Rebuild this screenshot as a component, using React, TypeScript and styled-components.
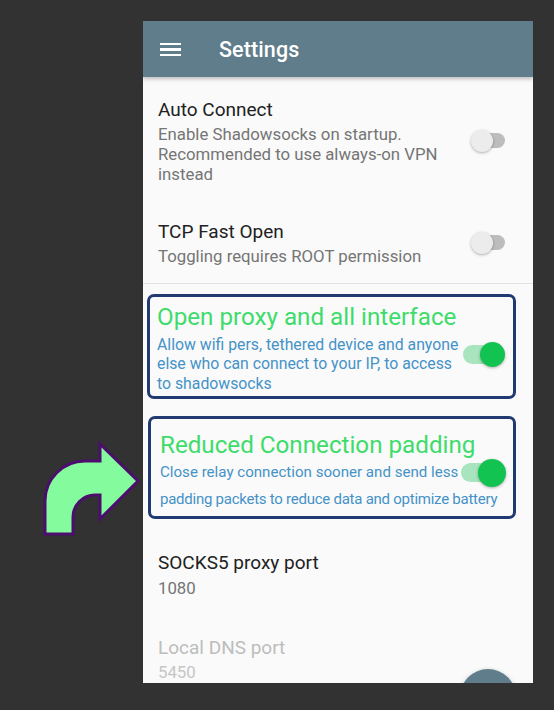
import React from "react";
import styled, { createGlobalStyle } from "styled-components";

const GlobalStyle = createGlobalStyle`
  html, body {
    margin: 0;
    padding: 0;
    background: #323232;
  }
  body {
    font-family: Roboto, "Noto Sans", "Liberation Sans", sans-serif;
  }
`;

const Stage = styled.div`
  position: relative;
  width: 554px;
  height: 710px;
  background: #323232;
  padding: 21px 0 0 143px;
  box-sizing: border-box;
  overflow: hidden;
`;

const Screen = styled.div`
  position: relative;
  width: 390px;
  height: 662px;
  background: #fafafa;
  overflow: hidden;
  display: flex;
  flex-direction: column;
`;

const Toolbar = styled.header`
  height: 56px;
  flex: none;
  background: #607d8b;
  display: flex;
  align-items: center;
  padding-left: 17px;
  gap: 38px;
  box-shadow: 0 2px 4px rgba(0, 0, 0, 0.25);
  position: relative;
  z-index: 1;
`;

const MenuIcon = styled.span`
  width: 21px;
  height: 14px;
  display: flex;
  flex-direction: column;
  justify-content: space-between;
  margin-top: 1px;
  & > i {
    display: block;
    height: 2.4px;
    background: #fff;
  }
`;

const Title = styled.h1`
  margin: 0;
  color: #fff;
  font-size: 21.5px;
  font-weight: 500;
  letter-spacing: 0.1px;
`;

const List = styled.div`
  display: flex;
  flex-direction: column;
`;

const Row = styled.div<{ $pt: number; $pb: number }>`
  display: flex;
  align-items: center;
  padding: ${(p) => p.$pt}px 28px ${(p) => p.$pb}px 15px;
`;

const TextCol = styled.div`
  flex: 1;
  display: flex;
  flex-direction: column;
`;

const RowTitle = styled.div<{ $muted?: boolean }>`
  font-size: 19px;
  line-height: 24px;
  color: ${(p) => (p.$muted ? "#bdbdbd" : "#212121")};
`;

const RowSub = styled.div<{ $muted?: boolean; $gap: number }>`
  font-size: 16.8px;
  line-height: 20px;
  margin-top: ${(p) => p.$gap}px;
  color: ${(p) => (p.$muted ? "#c6c6c6" : "#757575")};
  white-space: pre-line;
`;

const Divider = styled.hr`
  margin: 0;
  border: none;
  height: 1px;
  background: #e2e2e2;
`;

const Highlight = styled.div<{ $mt: number; $ml: number; $pad: string }>`
  margin: ${(p) => p.$mt}px 17px 0 ${(p) => p.$ml}px;
  border: 3px solid #223a72;
  border-radius: 7px;
  padding: ${(p) => p.$pad};
  display: grid;
  grid-template-columns: minmax(0, 1fr) auto;
  column-gap: 2px;
`;

const BoxTitle = styled.div<{ $lh: number; $mb: number }>`
  grid-column: 1 / -1;
  color: #3ddc6b;
  font-size: 24.2px;
  line-height: ${(p) => p.$lh}px;
  margin-bottom: ${(p) => p.$mb}px;
  white-space: nowrap;
`;

const BoxSub = styled.div<{ $lh: number; $size: number; $span?: boolean; $track?: number }>`
  grid-column: ${(p) => (p.$span ? "1 / -1" : "1")};
  color: #4592c7;
  font-size: ${(p) => p.$size}px;
  line-height: ${(p) => p.$lh}px;
  letter-spacing: ${(p) => p.$track ?? 0}px;
  white-space: pre;
`;

const Switch = styled.div<{ $on?: boolean; $thumb: number; $track: number; $w: number; $mt?: number }>`
  position: relative;
  width: ${(p) => p.$w}px;
  height: ${(p) => p.$thumb}px;
  align-self: ${(p) => (p.$mt === undefined ? "center" : "start")};
  margin-top: ${(p) => p.$mt ?? 0}px;
  flex: none;
  &::before {
    content: "";
    position: absolute;
    left: ${(p) => (p.$on ? 0 : p.$thumb / 2)}px;
    right: ${(p) => (p.$on ? p.$thumb / 2 : 0)}px;
    top: ${(p) => (p.$thumb - p.$track) / 2}px;
    height: ${(p) => p.$track}px;
    border-radius: ${(p) => p.$track / 2}px;
    background: ${(p) => (p.$on ? "#a8e4bd" : "#bdbdbd")};
  }
  &::after {
    content: "";
    position: absolute;
    top: 0;
    ${(p) => (p.$on ? "right: 0;" : "left: 0;")}
    width: ${(p) => p.$thumb}px;
    height: ${(p) => p.$thumb}px;
    border-radius: 50%;
    background: ${(p) => (p.$on ? "#12c352" : "#ececec")};
    box-shadow: 0 1px 3px rgba(0, 0, 0, 0.3);
  }
`;

const Fab = styled.div`
  position: absolute;
  left: 317px;
  top: 648px;
  width: 56px;
  height: 56px;
  border-radius: 50%;
  background: #607d8b;
  box-shadow: 0 2px 5px rgba(0, 0, 0, 0.3);
`;

const Pointer = styled.svg`
  position: absolute;
  left: 40px;
  top: 439px;
`;

function CurvedArrow() {
  return (
    <Pointer width="104" height="100" viewBox="0 0 104 100">
      <path
        d="M60 5 L98 42 L60 80 L60 56 L55 56 A22 22 0 0 0 33 78 L33 95 L5 95 L5 62 A40 40 0 0 1 45 22 L60 22 Z"
        fill="#84fb9c"
        stroke="#4d0d6e"
        strokeWidth="3"
        strokeLinejoin="miter"
      />
    </Pointer>
  );
}

export default function App() {
  return (
    <>
      <GlobalStyle />
      <Stage>
        <Screen>
          <Toolbar>
            <MenuIcon>
              <i />
              <i />
              <i />
            </MenuIcon>
            <Title>Settings</Title>
          </Toolbar>
          <List>
            <Row $pt={20.5} $pb={18}>
              <TextCol>
                <RowTitle>Auto Connect</RowTitle>
                <RowSub $gap={2}>
                  {"Enable Shadowsocks on startup.\nRecommended to use always-on VPN\ninstead"}
                </RowSub>
              </TextCol>
              <Switch $thumb={22} $track={15} $w={34} />
            </Row>
            <Row $pt={18} $pb={17.5}>
              <TextCol>
                <RowTitle>TCP Fast Open</RowTitle>
                <RowSub $gap={2}>Toggling requires ROOT permission</RowSub>
              </TextCol>
              <Switch $thumb={22} $track={15} $w={34} />
            </Row>
            <Divider />
            <Highlight $mt={10} $ml={4} $pad="5.8px 8px 2.5px 7px">
              <BoxTitle $lh={28} $mb={4}>
                Open proxy and all interface
              </BoxTitle>
              <BoxSub $lh={19.5} $size={15.8}>
                {"Allow wifi pers, tethered device and anyone\nelse who can connect to your IP, to access\nto shadowsocks"}
              </BoxSub>
              <Switch $on $thumb={25} $track={19} $w={42} $mt={7} />
            </Highlight>
            <Highlight $mt={17} $ml={5} $pad="12.3px 7px 5px 9px">
              <BoxTitle $lh={29} $mb={0}>
                Reduced Connection padding
              </BoxTitle>
              <BoxSub $lh={24} $size={15.1}>
                Close relay connection sooner and send less
              </BoxSub>
              <Switch $on $thumb={28} $track={19} $w={45} $mt={-1.6} />
              <BoxSub $lh={24} $size={15} $track={-0.25} $span>
                padding packets to reduce data and optimize battery
              </BoxSub>
            </Highlight>
            <Row $pt={32.5} $pb={20.5}>
              <TextCol>
                <RowTitle>SOCKS5 proxy port</RowTitle>
                <RowSub $gap={2.8}>1080</RowSub>
              </TextCol>
            </Row>
            <Row $pt={18.2} $pb={18}>
              <TextCol>
                <RowTitle $muted>Local DNS port</RowTitle>
                <RowSub $muted $gap={1.8}>5450</RowSub>
              </TextCol>
            </Row>
          </List>
          <Fab />
        </Screen>
        <CurvedArrow />
      </Stage>
    </>
  );
}
